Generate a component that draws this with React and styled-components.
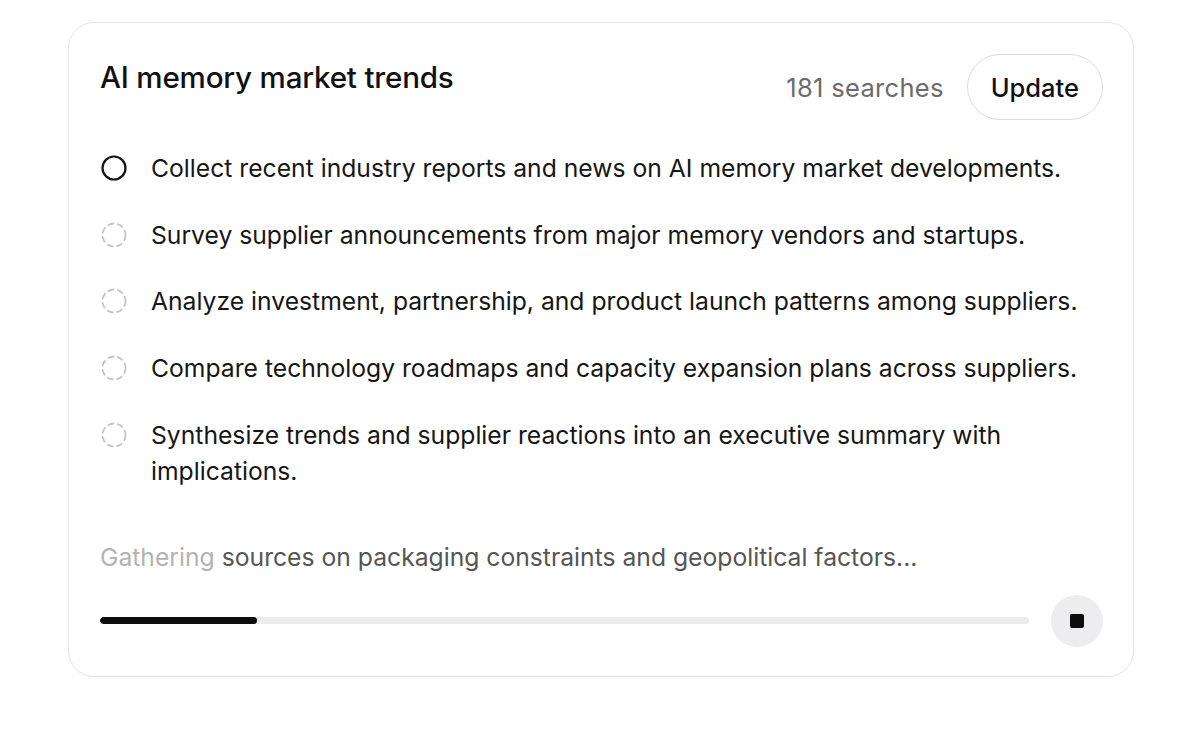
import React from "react";
import styled, { createGlobalStyle } from "styled-components";

const GlobalStyle = createGlobalStyle`
  body {
    margin: 0;
    background: #ffffff;
    font-family: Inter, "Noto Sans", sans-serif;
    color: #111111;
  }
`;

const steps = [
  { text: "Collect recent industry reports and news on AI memory market developments.", active: true },
  { text: "Survey supplier announcements from major memory vendors and startups." },
  { text: "Analyze investment, partnership, and product launch patterns among suppliers." },
  { text: "Compare technology roadmaps and capacity expansion plans across suppliers." },
  { text: "Synthesize trends and supplier reactions into an executive summary with implications." },
];

const StepIcon = ({ active }) =>
  active ? (
    <svg width="28" height="28" viewBox="0 0 28 28">
      <circle cx="14" cy="14" r="11.5" fill="none" stroke="#111" strokeWidth="2.2" />
    </svg>
  ) : (
    <svg width="28" height="28" viewBox="0 0 28 28">
      <circle
        cx="14"
        cy="14"
        r="11.5"
        fill="none"
        stroke="#c4c4c4"
        strokeWidth="1.8"
        strokeDasharray="5.2 4.4"
        strokeLinecap="round"
      />
    </svg>
  );

const App = () => {
  return (
    <>
      <GlobalStyle />
      <Page>
        <Card>
          <Header>
            <Title>AI memory market trends</Title>
            <HeaderRight>
              <Count>181 searches</Count>
              <UpdateButton>Update</UpdateButton>
            </HeaderRight>
          </Header>
          <StepList>
            {steps.map((s) => (
              <Step key={s.text}>
                <IconBox>
                  <StepIcon active={s.active} />
                </IconBox>
                <StepText>{s.text}</StepText>
              </Step>
            ))}
          </StepList>
          <Status>
            <Shimmer>Gathering</Shimmer> sources on packaging constraints and geopolitical factors...
          </Status>
          <Footer>
            <Track>
              <Fill style={{ width: `${(157 / 929) * 100}%` }} />
            </Track>
            <StopButton>
              <StopSquare />
            </StopButton>
          </Footer>
        </Card>
      </Page>
    </>
  );
};

const Page = styled.div`
  padding: 22px 66px 0 68px;
`;

const Card = styled.div`
  box-sizing: border-box;
  width: 1066px;
  height: 655px;
  border: 1.5px solid #e3e3e3;
  border-radius: 26px;
  padding: 30px 30px 0 31px;
  display: flex;
  flex-direction: column;
`;

const Header = styled.div`
  display: flex;
  justify-content: space-between;
  align-items: flex-start;
`;

const Title = styled.h2`
  margin: 7px 0 0;
  font-size: 29.6px;
  font-weight: 500;
  line-height: 34px;
  letter-spacing: -0.2px;
  color: #111;
`;

const HeaderRight = styled.div`
  display: flex;
  align-items: center;
  gap: 23px;
  margin-top: 1px;
`;

const Count = styled.span`
  font-size: 25.5px;
  letter-spacing: 0.3px;
  color: #6b6b6b;
`;

const UpdateButton = styled.button`
  height: 66px;
  padding: 0 23px;
  border: 1.5px solid #dcdcdc;
  border-radius: 33px;
  background: #fff;
  font-family: inherit;
  font-size: 25.5px;
  font-weight: 500;
  color: #111;
`;

const StepList = styled.ul`
  list-style: none;
  margin: 30px 0 0;
  padding: 0;
  display: flex;
  flex-direction: column;
  gap: 30.7px;
`;

const Step = styled.li`
  display: flex;
  align-items: flex-start;
  gap: 23px;
`;

const IconBox = styled.span`
  width: 28px;
  height: 36px;
  display: flex;
  align-items: center;
  flex-shrink: 0;
`;

const StepText = styled.span`
  font-size: 24.7px;
  line-height: 36px;
  color: #161616;
`;

const Status = styled.div`
  margin-top: 50px;
  font-size: 24.7px;
  line-height: 36px;
  color: #555;
`;

const Shimmer = styled.span`
  color: #b3b3b3;
`;

const Footer = styled.div`
  display: flex;
  align-items: center;
  gap: 22px;
  margin-top: 20px;
`;

const Track = styled.div`
  flex: 1;
  height: 7px;
  border-radius: 4px;
  background: #ececee;
  overflow: hidden;
`;

const Fill = styled.div`
  height: 100%;
  border-radius: 4px;
  background: #0d0d0d;
`;

const StopButton = styled.button`
  width: 52px;
  height: 52px;
  border-radius: 50%;
  border: none;
  background: #ededef;
  display: flex;
  align-items: center;
  justify-content: center;
  padding: 0;
`;

const StopSquare = styled.span`
  width: 14px;
  height: 14px;
  border-radius: 2px;
  background: #0d0d0d;
`;

export default App;
